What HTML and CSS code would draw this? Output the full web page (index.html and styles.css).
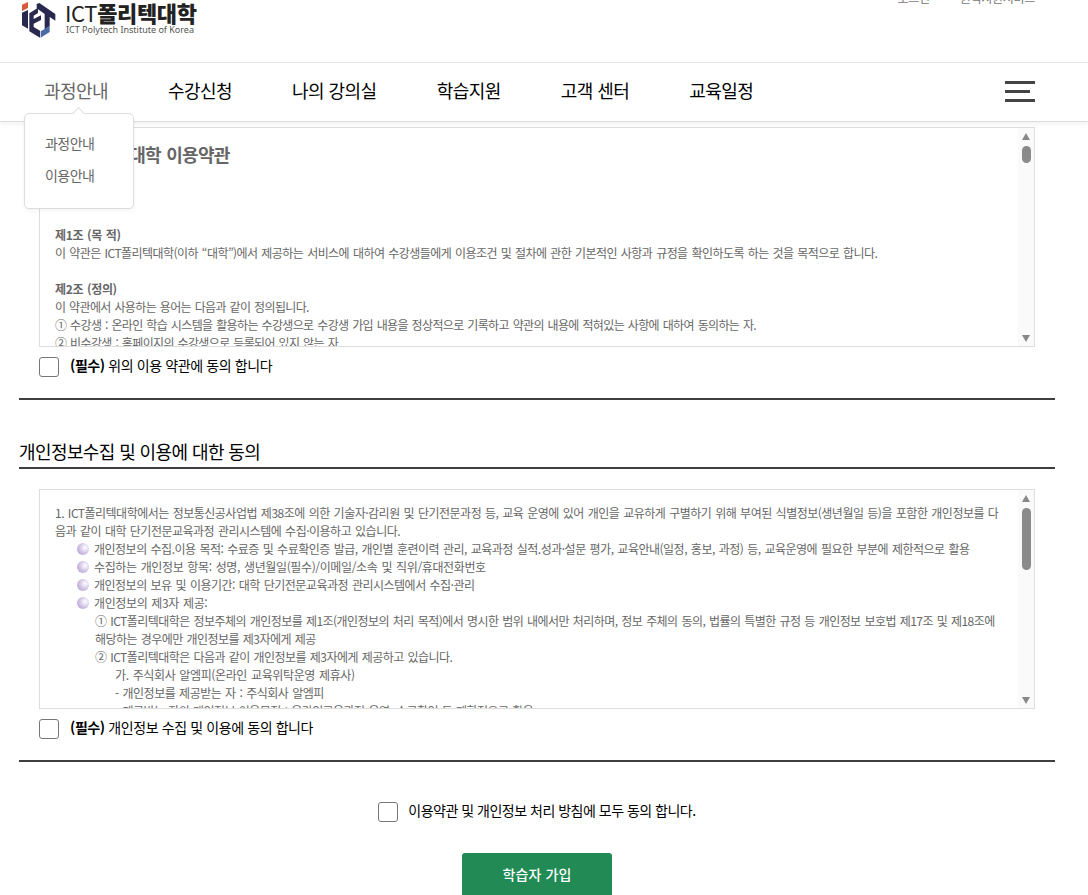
FILE: index.html
```html
<!DOCTYPE html>
<html lang="ko">
<head>
    <meta charset="UTF-8">
    <meta name="viewport" content="width=device-width, initial-scale=1.0">
    <title>ICT폴리텍대학</title>
    <link rel="stylesheet" href="styles.css">
</head>
<body>
    <header class="header">
        <div class="header-top">
            <a class="logo" href="#">
                <svg class="logo-mark" width="34" height="36" viewBox="18 6 102 108">
                    <path fill="#d9593a" d="M18 14 36 6v18l-18 9z"/>
                    <path fill="#29284f" d="M18 38l18-8v56l-18-10z"/>
                    <path fill="#29284f" d="M40 40l26-17v16l-13 8v10l22-11v14l-22 11v10l19 11v21L40 94z"/>
                    <path fill="#29284f" d="M62 12l8-3 48 33v20l-17-11v27L86 91V42L62 25z"/>
                    <path fill="#4a6ba6" d="M74 94l12-7 15-11v20l-27 17z"/>
                </svg>
                <span class="logo-text">
                    <span class="logo-name">ICT<b>폴리텍대학</b></span>
                    <span class="logo-sub">ICT Polytech Institute of Korea</span>
                </span>
            </a>
            <div class="util">
                <a href="#">로그인</a>
                <a href="#">원격지원서비스</a>
            </div>
        </div>
        <nav class="gnb">
            <ul class="menu">
                <li class="menu-item active">
                    <a href="#">과정안내</a>
                    <ul class="submenu">
                        <li><a href="#">과정안내</a></li>
                        <li><a href="#">이용안내</a></li>
                    </ul>
                </li>
                <li class="menu-item"><a href="#">수강신청</a></li>
                <li class="menu-item"><a href="#">나의 강의실</a></li>
                <li class="menu-item"><a href="#">학습지원</a></li>
                <li class="menu-item"><a href="#">고객 센터</a></li>
                <li class="menu-item"><a href="#">교육일정</a></li>
            </ul>
            <button class="burger" type="button" aria-label="전체메뉴"><i></i><i></i><i></i></button>
        </nav>
    </header>

    <main class="content">
        <section class="agree">
            <div class="terms">
                <div class="terms-text">
                    <h3>ICT폴리텍대학 이용약관</h3>
                    <p class="loose"><b>제1조 (목 적)</b></p>
                    <p class="tight">이 약관은 ICT폴리텍대학(이하 “대학”)에서 제공하는 서비스에 대하여 수강생들에게 이용조건 및 절차에 관한 기본적인 사항과 규정을 확인하도록 하는 것을 목적으로 합니다.</p>
                    <p class="blank"></p>
                    <p class="loose"><b>제2조 (정의)</b></p>
                    <p class="tighter">이 약관에서 사용하는 용어는 다음과 같이 정의됩니다.</p>
                    <p class="tighter">① 수강생 : 온라인 학습 시스템을 활용하는 수강생으로 수강생 가입 내용을 정상적으로 기록하고 약관의 내용에 적혀있는 사항에 대하여 동의하는 자.</p>
                    <p class="tighter">② 비수강생 : 홈페이지의 수강생으로 등록되어 있지 않는 자</p>
                </div>
                <div class="scrollbar">
                    <i class="arrow up"></i>
                    <i class="thumb thumb-short"></i>
                    <i class="arrow down"></i>
                </div>
            </div>
            <label class="check"><input type="checkbox"><span><b>(필수)</b> 위의 이용 약관에 동의 합니다</span></label>
        </section>

        <h2 class="title">개인정보수집 및 이용에 대한 동의</h2>
        <section class="agree agree-privacy">
            <div class="terms">
                <div class="terms-text">
                    <p>1. ICT폴리텍대학에서는 정보통신공사업법 제38조에 의한 기술자·감리원 및 단기전문과정 등, 교육 운영에 있어 개인을 교유하게 구별하기 위해 부여된 식별정보(생년월일 등)을 포함한 개인정보를 다<br>음과 같이 대학 단기전문교육과정 관리시스템에 수집·이용하고 있습니다.</p>
                    <ul class="dots">
                        <li>개인정보의 수집.이용 목적: 수료증 및 수료확인증 발급, 개인별 훈련이력 관리, 교육과정 실적.성과·설문 평가, 교육안내(일정, 홍보, 과정) 등, 교육운영에 필요한 부분에 제한적으로 활용</li>
                        <li class="loose">수집하는 개인정보 항목: 성명, 생년월일(필수)/이메일/소속 및 직위/휴대전화번호</li>
                        <li>개인정보의 보유 및 이용기간: 대학 단기전문교육과정 관리시스템에서 수집·관리</li>
                        <li class="loose">개인정보의 제3자 제공:</li>
                    </ul>
                    <p class="in1 tight">① ICT폴리텍대학은 정보주체의 개인정보를 제1조(개인정보의 처리 목적)에서 명시한 범위 내에서만 처리하며, 정보 주체의 동의, 법률의 특별한 규정 등 개인정보 보호법 제17조 및 제18조에<br>해당하는 경우에만 개인정보를 제3자에게 제공</p>
                    <p class="in1 tight">② ICT폴리텍대학은 다음과 같이 개인정보를 제3자에게 제공하고 있습니다.</p>
                    <p class="in2 loose">가. 주식회사 알엠피(온라인 교육위탁운영 제휴사)</p>
                    <p class="in2">- 개인정보를 제공받는 자 : 주식회사 알엠피</p>
                    <p class="in2 tight">- 제공받는 자의 개인정보 이용목적 : 온라인교육과정 운영, 수료확인 등 제한적으로 활용</p>
                </div>
                <div class="scrollbar">
                    <i class="arrow up"></i>
                    <i class="thumb thumb-long"></i>
                    <i class="arrow down"></i>
                </div>
            </div>
            <label class="check"><input type="checkbox"><span><b>(필수)</b> 개인정보 수집 및 이용에 동의 합니다</span></label>
        </section>

        <div class="agree-all">
            <label class="check"><input type="checkbox"><span>이용약관 및 개인정보 처리 방침에 모두 동의 합니다.</span></label>
        </div>
        <button class="join" type="button">학습자 가입</button>
    </main>
</body>
</html>
```
FILE: styles.css
```css
* {
    box-sizing: border-box;
    margin: 0;
    padding: 0;
}
html {
    overflow: hidden;
}
body {
    height: 895px;
    overflow: hidden;
    font-family: "Noto Sans CJK KR", sans-serif;
    font-size: 12px;
    line-height: 18px;
    color: #666;
    background: #fff;
}
ul {
    list-style: none;
}
a {
    color: inherit;
    text-decoration: none;
}

/* header */
.header {
    position: relative;
    z-index: 10;
    height: 122px;
    background: #fff;
    border-bottom: 1px solid #ddd;
    box-shadow: 0 2px 5px rgba(0,0,0,0.06);
}
.header-top {
    display: flex;
    justify-content: space-between;
    height: 63px;
    padding: 0 53px 0 22px;
    border-bottom: 1px solid #e5e5e5;
}
.logo {
    display: flex;
    gap: 9px;
}
.logo-mark {
    margin-top: 2px;
}
.logo-text {
    display: flex;
    flex-direction: column;
}
.logo-name {
    font-size: 22px;
    line-height: 25px;
    letter-spacing: -0.35px;
    color: #222;
    white-space: nowrap;
}
.logo-name b {
    font-weight: 900;
}
.logo-sub {
    padding-left: 1px;
    font-family: "Noto Sans", sans-serif;
    font-size: 9px;
    line-height: 10px;
    color: #555;
}
.util {
    display: flex;
    gap: 30px;
    margin-top: -11px;
    letter-spacing: -0.3px;
    color: #777;
}
.gnb {
    display: flex;
    justify-content: space-between;
    height: 58px;
    padding: 14px 53px 0 44px;
}
.menu {
    display: flex;
    gap: 60px;
}
.menu-item {
    position: relative;
    font-size: 18px;
    line-height: 26px;
    letter-spacing: -0.55px;
    color: #000;
}
.menu-item.active {
    color: #666;
}
.submenu {
    position: absolute;
    top: 36px;
    left: -20px;
    width: 110px;
    height: 96px;
    padding: 13px 20px;
    font-size: 14px;
    line-height: 32px;
    background: #fff;
    border: 1px solid #ddd;
    border-radius: 5px;
    box-shadow: 0 2px 4px rgba(0,0,0,0.05);
}
.submenu::before {
    content: "";
    position: absolute;
    top: -5px;
    left: 49px;
    width: 8px;
    height: 8px;
    background: #fff;
    border: 1px solid #ddd;
    border-width: 1px 0 0 1px;
    transform: rotate(45deg);
}
.burger {
    display: flex;
    flex-direction: column;
    gap: 6px;
    width: 30px;
    height: 21px;
    margin-top: 4px;
    border: 0;
    background: none;
}
.burger i {
    width: 30px;
    height: 3px;
    background: #444;
}
.burger i:nth-child(2) {
    width: 25px;
}

/* terms */
.content {
    width: 1036px;
    margin: 5px 0 0 19px;
}
.agree {
    height: 273px;
    padding: 0 20px;
    border-bottom: 2px solid #3e3e3e;
}
.terms {
    display: flex;
    justify-content: space-between;
    height: 220px;
    border: 1px solid #ddd;
    overflow: hidden;
}
.terms-text {
    padding: 14px 0 0 15px;
    letter-spacing: -0.5px;
    word-spacing: 1px;
    white-space: nowrap;
}
.terms-text h3 {
    height: 84px;
    font-size: 18px;
    line-height: 24px;
    letter-spacing: -0.7px;
}
.loose {
    letter-spacing: -0.37px;
}
.tight {
    letter-spacing: -0.55px;
}
.tighter {
    letter-spacing: -0.64px;
}
.blank {
    height: 18px;
}
.scrollbar {
    display: flex;
    flex-direction: column;
    align-items: center;
    width: 16px;
    padding: 5px 0 4px;
    background: #fafafa;
}
.arrow {
    border: 4.5px solid transparent;
}
.arrow.up {
    border-top: 0;
    border-bottom: 7px solid #888;
}
.arrow.down {
    margin-top: auto;
    border-bottom: 0;
    border-top: 7px solid #888;
}
.thumb {
    width: 9px;
    margin-top: 6px;
    border-radius: 5px;
    background: #8a8a8a;
}
.thumb-short {
    height: 17px;
}
.thumb-long {
    height: 62px;
}
.check {
    display: flex;
    gap: 11px;
    height: 20px;
    margin-top: 10px;
    font-size: 14px;
    line-height: 17px;
    letter-spacing: -0.4px;
    color: #000;
    white-space: nowrap;
}
.check input {
    appearance: none;
    width: 20px;
    height: 20px;
    border: 1px solid #767676;
    border-radius: 3px;
    background: #fff;
}
.title {
    height: 69px;
    padding-top: 37px;
    font-size: 18px;
    font-weight: 400;
    line-height: 28px;
    letter-spacing: -0.6px;
    color: #000;
    border-bottom: 2px solid #3e3e3e;
}
.agree-privacy {
    height: 293px;
    padding-top: 20px;
}
.dots {
    padding-left: 22px;
}
.dots li {
    display: flex;
    align-items: center;
    gap: 5px;
}
.dots li::before {
    content: "";
    width: 12px;
    height: 12px;
    border-radius: 50%;
    background: radial-gradient(circle at 68% 38%, #fff 0, #d6c9e8 45%, #a893c6 100%);
}
.in1 {
    padding-left: 40px;
}
.in2 {
    padding-left: 60px;
}
.agree-all {
    display: flex;
    justify-content: center;
    padding-top: 30px;
}
.agree-all .check {
    gap: 10px;
    letter-spacing: -0.5px;
}
.join {
    display: block;
    width: 150px;
    height: 44px;
    margin: 31px auto 0;
    padding-bottom: 3px;
    border: 0;
    border-radius: 3px;
    background: #228b55;
    color: #fff;
    font-family: inherit;
    font-size: 14px;
    font-weight: 500;
    letter-spacing: 0.1px;
}
```
